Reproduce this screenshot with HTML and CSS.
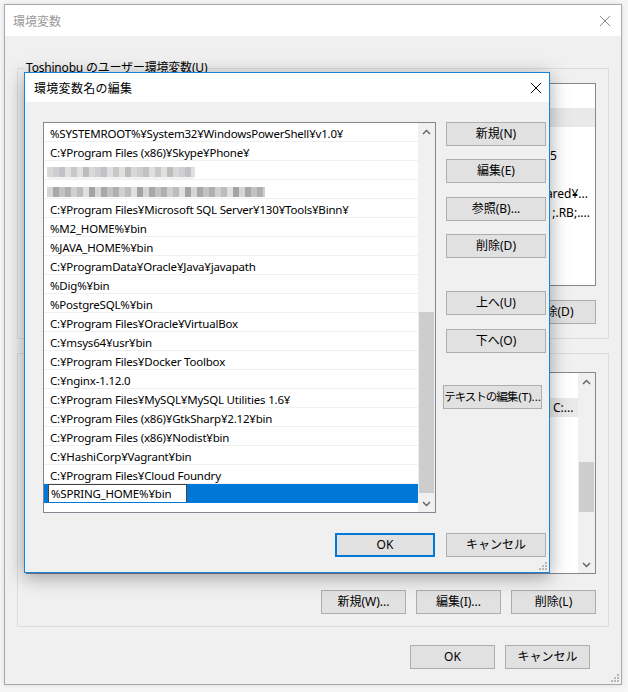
FILE: index.html
```html
<!DOCTYPE html>
<html lang="ja">
<head>
<meta charset="utf-8">
<link rel="stylesheet" href="styles.css">
</head>
<body>
<div class="win">
  <div class="win-title">
    <span class="win-title-text">環境変数</span>
    <svg class="xicon gray" width="12" height="12" viewBox="0 0 12 12"><path d="M1 1L11 11M11 1L1 11" stroke="#8a8a8a" stroke-width="1" fill="none"/></svg>
  </div>
  <div class="win-body">
    <fieldset class="group g1">
      <legend>Toshinobu のユーザー環境変数(U)</legend>
      <div class="lv lv1">
        <div class="lv-head"></div>
        <div class="lv-row lv-sel"></div>
        <div class="lv-row"></div>
        <div class="lv-row"><span class="v1">.5</span></div>
        <div class="lv-row"></div>
        <div class="lv-row"><span class="v3">ared¥...</span></div>
        <div class="lv-row"><span class="v4">;.RB;....</span></div>
      </div>
      <div class="btnrow">
        <button class="btn w85">新規(N)...</button>
        <button class="btn w85">編集(E)...</button>
        <button class="btn w85">削除(D)</button>
      </div>
    </fieldset>
    <fieldset class="group g2">
      <div class="lv lv2">
        <div class="lv2-main">
          <div class="lv-head"></div>
          <div class="lv-row lv-sel2"><span class="v5">C:...</span></div>
        </div>
        <div class="sb">
          <div class="sb-btn"><svg width="9" height="6" viewBox="0 0 9 6"><path d="M1 5L4.5 1.5L8 5" stroke="#606060" stroke-width="1.4" fill="none"/></svg></div>
          <div class="sb-track sb2-track"><div class="sb-thumb sb2-thumb"></div></div>
          <div class="sb-btn"><svg width="9" height="6" viewBox="0 0 9 6"><path d="M1 1L4.5 4.5L8 1" stroke="#606060" stroke-width="1.4" fill="none"/></svg></div>
        </div>
      </div>
      <div class="btnrow g2-btns">
        <button class="btn w85">新規(W)...</button>
        <button class="btn w85">編集(I)...</button>
        <button class="btn w85">削除(L)</button>
      </div>
    </fieldset>
    <div class="btnrow main-btns">
      <button class="btn w85">OK</button>
      <button class="btn w85">キャンセル</button>
    </div>
  </div>
  <svg class="grip outer-grip" width="10" height="10" viewBox="0 0 10 10"><g fill="#b8b8b8"><rect x="8" y="2" width="2" height="2"/><rect x="5" y="5" width="2" height="2"/><rect x="8" y="5" width="2" height="2"/><rect x="2" y="8" width="2" height="2"/><rect x="5" y="8" width="2" height="2"/><rect x="8" y="8" width="2" height="2"/></g></svg>
</div>

<div class="dlg">
  <div class="dlg-title">
    <span>環境変数名の編集</span>
    <svg class="xicon" width="12" height="12" viewBox="0 0 12 12"><path d="M1 1L11 11M11 1L1 11" stroke="#000" stroke-width="1" fill="none"/></svg>
  </div>
  <div class="dlg-body">
    <div class="dlg-grid">
      <div class="plist">
        <div class="plist-rows">
          <div class="prow">%SYSTEMROOT%¥System32¥WindowsPowerShell¥v1.0¥</div>
          <div class="prow">C:¥Program Files (x86)¥Skype¥Phone¥</div>
          <div class="prow"><span class="mosaic m1"></span></div>
          <div class="prow"><span class="mosaic m2"></span></div>
          <div class="prow">C:¥Program Files¥Microsoft SQL Server¥130¥Tools¥Binn¥</div>
          <div class="prow">%M2_HOME%¥bin</div>
          <div class="prow">%JAVA_HOME%¥bin</div>
          <div class="prow">C:¥ProgramData¥Oracle¥Java¥javapath</div>
          <div class="prow">%Dig%¥bin</div>
          <div class="prow">%PostgreSQL%¥bin</div>
          <div class="prow">C:¥Program Files¥Oracle¥VirtualBox</div>
          <div class="prow">C:¥msys64¥usr¥bin</div>
          <div class="prow">C:¥Program Files¥Docker Toolbox</div>
          <div class="prow">C:¥nginx-1.12.0</div>
          <div class="prow">C:¥Program Files¥MySQL¥MySQL Utilities 1.6¥</div>
          <div class="prow">C:¥Program Files (x86)¥GtkSharp¥2.12¥bin</div>
          <div class="prow">C:¥Program Files (x86)¥Nodist¥bin</div>
          <div class="prow">C:¥HashiCorp¥Vagrant¥bin</div>
          <div class="prow">C:¥Program Files¥Cloud Foundry</div>
          <div class="prow prow-sel"><span class="editbox">%SPRING_HOME%¥bin</span></div>
        </div>
        <div class="sb">
          <div class="sb-btn"><svg width="9" height="6" viewBox="0 0 9 6"><path d="M1 5L4.5 1.5L8 5" stroke="#606060" stroke-width="1.4" fill="none"/></svg></div>
          <div class="sb-track sb1-track"><div class="sb-thumb sb1-thumb"></div></div>
          <div class="sb-btn"><svg width="9" height="6" viewBox="0 0 9 6"><path d="M1 1L4.5 4.5L8 1" stroke="#606060" stroke-width="1.4" fill="none"/></svg></div>
        </div>
      </div>
      <div class="dlg-btns">
        <button class="btn w100">新規(N)</button>
        <button class="btn w100 mt13">編集(E)</button>
        <button class="btn w100 mt14">参照(B)...</button>
        <button class="btn w100 mt13">削除(D)</button>
        <button class="btn w100 mt33">上へ(U)</button>
        <button class="btn w100 mt14">下へ(O)</button>
        <button class="btn btn-text mt32"><span class="jp-tight">テキストの編集</span>(T)...</button>
      </div>
    </div>
    <div class="btnrow dlg-bottom">
      <button class="btn w100 btn-default">OK</button>
      <button class="btn w100">キャンセル</button>
    </div>
  </div>
  <svg class="grip dlg-grip" width="10" height="10" viewBox="0 0 10 10"><g fill="#b8b8b8"><rect x="8" y="2" width="2" height="2"/><rect x="5" y="5" width="2" height="2"/><rect x="8" y="5" width="2" height="2"/><rect x="2" y="8" width="2" height="2"/><rect x="5" y="8" width="2" height="2"/><rect x="8" y="8" width="2" height="2"/></g></svg>
</div>
</body>
</html>
```

FILE: styles.css
```css
* { box-sizing: border-box; }
html, body { margin: 0; }
body {
  width: 628px;
  height: 692px;
  overflow: hidden;
  position: relative;
  background: #f6f6f6;
  font-family: "Noto Sans", "Noto Sans CJK JP", sans-serif;
  font-size: 12px;
  color: #000;
}
button { font-family: inherit; font-size: 12px; color: #000; }

.win {
  margin: 4px 0 0 4px;
  width: 618px;
  height: 681px;
  border: 1px solid #aaaaaa;
  background: #f0f0f0;
  box-shadow: 0 0 5px rgba(0,0,0,0.12);
  display: flex;
  flex-direction: column;
  position: relative;
}
.win-title {
  flex: none;
  height: 31px;
  background: #fff;
  display: flex;
  align-items: center;
  justify-content: space-between;
  padding: 0 10px 0 8px;
  color: #9a9a9a;
  font-family: "Noto Sans CJK JP", sans-serif;
}
.win-body {
  display: flex;
  flex-direction: column;
  padding: 0 12px;
}
.group {
  margin: 0;
  border: 1px solid #dcdcdc;
  min-width: 0;
}
.group legend {
  padding: 0 1px;
  margin-left: -1px;
  height: 16px;
  line-height: 16px;
  letter-spacing: -0.2px;
  font-family: "Noto Sans", "Noto Sans CJK JP", sans-serif;
}
.g1 { margin-top: 24px; padding: 7px 12px 14px 8px; }
.g2 { margin-top: 14px; padding: 18px 12px 12px 8px; }

.lv {
  background: #fff;
  border: 1px solid #828790;
}
.lv1 { height: 203px; }
.lv2 { height: 202px; display: flex; }
.lv2-main { flex: 1; }
.lv-head { height: 24px; }
.lv-row {
  height: 19px;
  display: flex;
  align-items: center;
  justify-content: flex-end;
  white-space: nowrap;
  overflow: hidden;
}
.lv-sel { background: #e9e9e9; }
.lv-sel2 { background: #e9e9e9; margin-top: 1px; }
.v1 { padding-right: 38px; }
.v3 { padding-right: 7px; }
.v4 { padding-right: 5px; }
.v5 { width: 29px; padding-left: 4px; }

.btnrow { display: flex; justify-content: flex-end; gap: 10px; }
.g1 .btnrow { margin-top: 14px; }
.g2-btns { margin-top: 16px; }
.main-btns { margin-top: 18px; padding-right: 19px; }

.btn {
  height: 24px;
  padding: 0;
  background: #e1e1e1;
  border: 1px solid #adadad;
  border-radius: 0;
  display: flex;
  align-items: center;
  justify-content: center;
  white-space: nowrap;
  font-family: "Noto Sans", "Noto Sans CJK JP", sans-serif;
  line-height: 1;
}
.w85 { width: 85px; }
.w100 { width: 100px; }
.btn-default { border: 2px solid #0078d7; }
.btn-text { width: 99px; margin-left: -3px; font-size: 11.5px; }
.jp-tight { letter-spacing: -1px; margin-right: 1px; }
.mt13 { margin-top: 13px; }
.mt14 { margin-top: 14px; }
.mt32 { margin-top: 32px; }
.mt33 { margin-top: 33px; }

.grip { position: absolute; }
.outer-grip { right: 2px; bottom: 2px; }
.dlg-grip { right: 2px; bottom: 2px; }

/* dialog */
.dlg {
  position: absolute;
  left: 24px;
  top: 72px;
  width: 526px;
  height: 501px;
  border: 1px solid #1883d7;
  background: #f0f0f0;
  box-shadow: 0 4px 18px rgba(0,0,0,0.35);
  display: flex;
  flex-direction: column;
}
.dlg-title {
  flex: none;
  height: 29px;
  background: #fff;
  display: flex;
  align-items: center;
  justify-content: space-between;
  padding: 0 7px 0 9px;
  font-family: "Noto Sans CJK JP", sans-serif;
  letter-spacing: 0.3px;
}
.dlg-body { padding: 20px 0 0 18px; }
.dlg-grid {
  display: grid;
  grid-template-columns: 393px 100px;
  column-gap: 10px;
}
.plist {
  height: 391px;
  border: 1px solid #828790;
  background: #fff;
  display: flex;
}
.plist-rows { flex: 1; }
.prow {
  height: 19px;
  padding: 2px 0 0 6px;
  border-bottom: 1px solid #f0f0f0;
  white-space: nowrap;
  overflow: hidden;
  font-size: 11.5px;
  letter-spacing: -0.2px;
  display: flex;
  align-items: center;
}
.prow-sel {
  background: #0078d7;
  border-bottom-color: #0078d7;
  padding: 0 0 0 4px;
}
.editbox {
  background: #fff;
  border: 1px solid #444;
  height: 19px;
  width: 139px;
  padding: 1px 0 0 2px;
  display: flex;
  align-items: center;
}
.mosaic { display: block; height: 10px; margin-left: -3px; }
.m1 {
  width: 148px;
  margin-top: 1px;
  background: repeating-linear-gradient(90deg, #d8d8d8 0 6px, #cdcfd1 6px 12px, #c2c2c6 12px 18px, #dfdfdf 18px 24px, #c8c8c8 24px 30px, #e0e0dc 30px 36px, #bdbdbd 36px 42px);
  box-shadow: 0 6px 0 -1px #f2f2f2;
}
.m2 {
  width: 218px;
  margin-top: 3px;
  background: repeating-linear-gradient(90deg, #d6d6d6 0 6px, #a8a8a8 6px 12px, #c2c2c2 12px 18px, #b0b0b0 18px 24px, #d0d0d0 24px 30px, #bcbcbc 30px 36px, #e0e0e0 36px 42px, #a4a4a4 42px 48px);
}

.sb {
  width: 17px;
  background: #f0f0f0;
  display: flex;
  flex-direction: column;
  flex: none;
}
.sb-btn {
  height: 17px;
  display: flex;
  align-items: center;
  justify-content: center;
}
.sb-track { flex: 1; display: flex; flex-direction: column; }
.sb-thumb { background: #cdcdcd; margin: 0 1px; }
.sb1-track { padding-top: 172px; }
.sb1-thumb { height: 181px; }
.sb2-track { padding-top: 72px; }
.sb2-thumb { height: 50px; }

.dlg-btns { display: flex; flex-direction: column; }
.dlg-bottom { margin-top: 20px; gap: 11px; width: 503px; }
```
